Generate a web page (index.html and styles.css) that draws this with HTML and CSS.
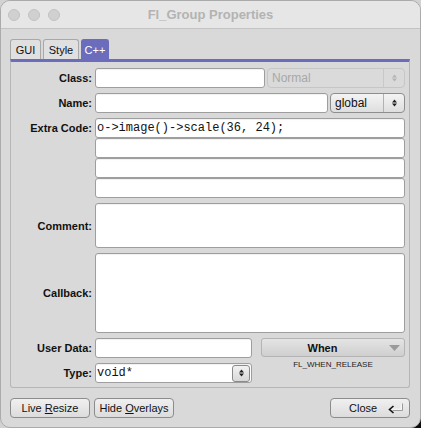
FILE: index.html
```html
<!DOCTYPE html>
<html>
<head>
<meta charset="utf-8">
<title>Fl_Group Properties</title>
<link rel="stylesheet" href="styles.css">
</head>
<body>
<div class="window">
  <div class="titlebar">
    <div class="lights"><span class="light"></span><span class="light"></span><span class="light"></span></div>
    <div class="title">Fl_Group Properties</div>
    <div class="spacer"></div>
  </div>
  <div class="content">
    <div class="tabs">
      <div class="tab tab-gui">GUI</div>
      <div class="tab tab-style">Style</div>
      <div class="tab tab-cpp active">C++</div>
    </div>
    <div class="panel">
      <div class="form">
        <div class="lbl">Class:</div>
        <div class="span-row">
          <div class="input w-class"></div>
          <div class="choice choice-normal disabled">
            <span class="choice-text">Normal</span>
            <span class="choice-btn"><svg width="7" height="10" viewBox="0 0 7 10"><path d="M3.5 1.5 L6 4.5 H1Z M3.5 8.5 L6 5.5 H1Z" fill="#b4b4b4"/></svg></span>
          </div>
        </div>

        <div class="lbl">Name:</div>
        <div class="span-row">
          <div class="input w-name"></div>
          <div class="choice choice-global">
            <span class="choice-text">global</span>
            <span class="choice-btn"><svg width="7" height="10" viewBox="0 0 7 10"><path d="M3.5 1.5 L6 4.5 H1Z M3.5 8.5 L6 5.5 H1Z" fill="#222"/></svg></span>
          </div>
        </div>

        <div class="lbl lbl-top">Extra Code:</div>
        <div class="span-col">
          <div class="input code">o-&gt;image()-&gt;scale(36, 24);</div>
          <div class="input code"></div>
          <div class="input code"></div>
          <div class="input code"></div>
        </div>

        <div class="lbl">Comment:</div>
        <div class="input area comment"></div>

        <div class="lbl">Callback:</div>
        <div class="input area callback"></div>

        <div class="lbl">User Data:</div>
        <div class="input"></div>
        <div class="when-btn">
          <span class="when-text">When</span>
          <svg class="when-tri" width="11" height="6" viewBox="0 0 11 6"><path d="M0 0 H11 L5.5 6Z" fill="#9a9a9a"/></svg>
        </div>

        <div class="lbl">Type:</div>
        <div class="input type-input">
          <span class="code-text">void*</span>
          <span class="spin-btn"><svg width="7" height="10" viewBox="0 0 7 10"><path d="M3.5 1.5 L6 4.5 H1Z M3.5 8.5 L6 5.5 H1Z" fill="#222"/></svg></span>
        </div>
        <div class="when-value">FL_WHEN_RELEASE</div>
      </div>
    </div>
    <div class="footer">
      <div class="footer-left">
        <div class="btn">Live <u>R</u>esize</div>
        <div class="btn">Hide <u>O</u>verlays</div>
      </div>
      <div class="btn btn-close">
        <span class="close-text">Close</span>
        <svg class="ret" width="16" height="11" viewBox="0 0 16 11">
          <path d="M13.5 1 V6.5 H4" fill="none" stroke="#f4f4f4" stroke-width="2"/>
          <path d="M14.5 0.5 V7.5 H4.5" fill="none" stroke="#9a9a9a" stroke-width="1"/>
          <path d="M5.5 3 L1.5 6.5 L5.5 10" fill="none" stroke="#111" stroke-width="1.6"/>
        </svg>
      </div>
    </div>
  </div>
</div>
</body>
</html>
```
FILE: styles.css
```css
html {
  background: linear-gradient(135deg, #d2d2d2 90%, #0c0c0c 90%);
  height: 100%;
}
body {
  margin: 0;
  width: 421px;
  height: 428px;
  font-family: "Liberation Sans", Arial, sans-serif;
  color: #111;
}
.window {
  width: 421px;
  height: 428px;
  box-sizing: border-box;
  border: 1px solid #ababab;
  border-radius: 10px;
  background: #d9d9d9;
  overflow: hidden;
}
.titlebar {
  height: 27px;
  border-bottom: 1px solid #c3c3c3;
  background: #e6e6e6;
  display: grid;
  grid-template-columns: 1fr auto 1fr;
  align-items: center;
}
.lights {
  display: flex;
  gap: 8px;
  padding-left: 7px;
}
.light {
  width: 12px;
  height: 12px;
  box-sizing: border-box;
  border-radius: 50%;
  background: #d0d0d0;
  border: 1px solid #c2c2c2;
}
.title {
  font-size: 13px;
  font-weight: bold;
  color: #b3b3b3;
}
.content {
  padding: 10px 10px 0 9px;
}
.tabs {
  display: flex;
  gap: 2px;
  height: 20px;
}
.tab {
  box-sizing: border-box;
  height: 20px;
  border: 1px solid #a8a8a8;
  border-bottom: none;
  border-radius: 3px 3px 0 0;
  background: #e0e0e0;
  font-size: 11px;
  line-height: 20px;
  text-align: center;
  color: #111;
}
.tab-gui { width: 31px; }
.tab-style { width: 36px; }
.tab-cpp { width: 28px; }
.tab.active {
  background: #6c6cbc;
  border-color: #6c6cbc;
  color: #fff;
}
.panel {
  width: 400px;
  box-sizing: border-box;
  border: 1px solid #b6b6b6;
  border-top: 3px solid #6c6cbc;
  border-radius: 0 0 3px 3px;
  padding: 6px 4px 4px 0;
}
.form {
  display: grid;
  grid-template-columns: 81px 157px 150px;
  grid-template-rows: 20px 20px 80px 45px 80px 20px 20px;
  column-gap: 3px;
  row-gap: 5px;
}
.lbl {
  font-size: 11px;
  font-weight: bold;
  text-align: right;
  align-self: center;
  white-space: nowrap;
}
.lbl-top {
  align-self: start;
  line-height: 20px;
}
.span-row {
  grid-column: 2 / 4;
  display: flex;
  gap: 2px;
}
.span-col {
  grid-column: 2 / 4;
  display: flex;
  flex-direction: column;
}
.input {
  box-sizing: border-box;
  height: 20px;
  background: #fff;
  border: 1px solid #9e9e9e;
  border-radius: 3px;
  box-shadow: inset 0 1px 1px rgba(0,0,0,0.06);
}
.w-class { width: 170px; }
.w-name { width: 233px; }
.code, .code-text {
  font-family: "Liberation Mono", "Courier New", monospace;
  font-size: 12px;
  line-height: 18px;
  padding-left: 1px;
  white-space: pre;
}
.area {
  grid-column: 2 / 4;
  height: auto;
}
.choice {
  flex: 1;
  box-sizing: border-box;
  height: 20px;
  border: 1px solid #8e8e8e;
  border-radius: 4px;
  background: linear-gradient(#f4f4f4, #dedede);
  display: flex;
  align-items: center;
  font-size: 12px;
}
.choice-text {
  flex: 1;
  padding-left: 4px;
}
.choice-btn {
  width: 21px;
  height: 18px;
  box-sizing: border-box;
  border-left: 1px solid #b2b2b2;
  display: flex;
  align-items: center;
  justify-content: center;
}
.choice.disabled {
  border-color: #c6c6c6;
  background: #dadada;
  color: #a8a8a8;
}
.choice.disabled .choice-btn {
  border-left-color: #c8c8c8;
}
.when-btn {
  margin-left: 6px;
  box-sizing: border-box;
  height: 19px;
  border: 1px solid #b4b4b4;
  border-radius: 3px;
  background: linear-gradient(#e4e4e4, #cfcfcf);
  display: flex;
  align-items: center;
}
.when-text {
  flex: 1;
  text-align: center;
  font-size: 11px;
  font-weight: bold;
  padding-right: 6px;
}
.when-tri {
  margin-right: 4px;
}
.type-input {
  display: flex;
  align-items: center;
  justify-content: space-between;
}
.spin-btn {
  box-sizing: border-box;
  width: 18px;
  height: 17px;
  margin-right: 1px;
  border: 1px solid #8a8a8a;
  border-radius: 3px;
  background: linear-gradient(#f2f2f2, #d8d8d8);
  display: flex;
  align-items: center;
  justify-content: center;
}
.when-value {
  margin-left: 6px;
  font-size: 8px;
  text-align: center;
  align-self: start;
  margin-top: -3px;
  color: #222;
}
.footer {
  width: 400px;
  margin-top: 10px;
  display: flex;
  justify-content: space-between;
}
.footer-left {
  display: flex;
  gap: 4px;
}
.btn {
  box-sizing: border-box;
  width: 80px;
  height: 20px;
  border: 1px solid #8c8c8c;
  border-radius: 4px;
  background: linear-gradient(#f0f0f0, #dcdcdc);
  font-size: 11px;
  line-height: 18px;
  text-align: center;
}
.btn u {
  text-underline-offset: 1px;
}
.btn-close {
  display: flex;
  align-items: center;
  justify-content: space-between;
  padding: 0 5px 0 18px;
}
.ret {
  display: block;
}
```
